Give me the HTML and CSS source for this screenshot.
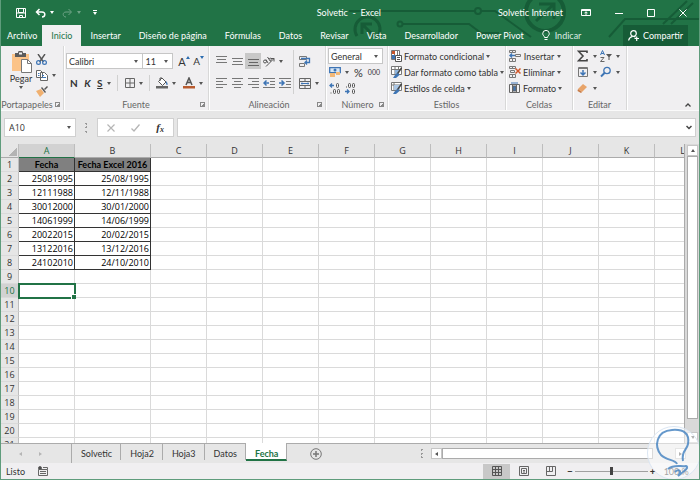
FILE: index.html
```
<!DOCTYPE html>
<html lang="es">
<head>
    <meta charset="UTF-8">
    <meta name="viewport" content="width=device-width, initial-scale=1.0">
    <title>Solvetic - Excel</title>
    <link rel="stylesheet" href="styles.css">
</head>
<body>
<div class="window">
    <header class="top">
        <svg class="circuit" width="350" height="46" viewBox="0 0 350 46" fill="none" stroke="#165c37" stroke-width="2">
            <path d="M0 11h126M132 11h14l36 26M54 24h66l12 9h18M260 37l16-18h74M314 24l24-23M322 24l22-21"/>
            <circle cx="129" cy="11" r="3"/>
            <circle cx="51" cy="24" r="2.5"/>
            <path d="M8 36A12.500 12.500 0 1 1 29 36M25 36L14 25M13 34V24h10" stroke-width="3"/>
            <circle cx="196" cy="12" r="19" stroke-width="4"/>
            <path d="M187 21l17-16M190 4h15v15" stroke-width="3"/>
        </svg>
        <div class="titlebar">
            <div class="quick">
                <button title="Guardar"><svg width="12" height="12" viewBox="0 0 12 12" fill="none" stroke="#fff"><path d="M1.500 1.500h9v9h-9zM2 6h8M3.500 1.500v4h5v-4M4.500 10.500v-2h3v2"/></svg></button>
                <button title="Deshacer"><svg width="11" height="10" viewBox="0 0 11 10" fill="none" stroke="#fff" stroke-width="1.500"><path d="M4.500 1L1.500 4l3 3M2 4h5c4 0 3.500 5 0 5"/></svg><i class="caret"></i></button>
                <button title="Rehacer" class="dim"><svg width="11" height="10" viewBox="0 0 11 10" fill="none" stroke="#fff"><path d="M6.500 1l3 3-3 3M9 4H4C0 4 .5 9 4 9"/></svg><i class="caret"></i></button>
                <button title="Personalizar" class="more"><i class="caret"></i></button>
            </div>
            <div class="doc-title">Solvetic &nbsp;-&nbsp; Excel</div>
            <div class="account">Solvetic Internet</div>
            <div class="win-buttons">
                <button title="Opciones de cinta"><svg width="10" height="9" viewBox="0 0 10 9" fill="none" stroke="#fff"><path d="M.5 1.500h9v6h-9zM.5 2.500h9M5 7V4M3.500 5L5 3.800 6.500 5"/></svg></button>
                <button title="Minimizar"><svg width="8" height="8" viewBox="0 0 8 8" stroke="#fff"><path d="M0 4.500h8"/></svg></button>
                <button title="Maximizar"><svg width="8" height="8" viewBox="0 0 8 8" fill="none" stroke="#fff"><path d="M.5.5h7v7h-7z"/></svg></button>
                <button title="Cerrar"><svg width="8" height="8" viewBox="0 0 8 8" stroke="#fff"><path d="M.5.5l7 7M7.500.5l-7 7"/></svg></button>
            </div>
        </div>
        <nav class="tabs">
            <a href="#">Archivo</a>
            <a href="#" class="active">Inicio</a>
            <a href="#">Insertar</a>
            <a href="#">Diseño de página</a>
            <a href="#">Fórmulas</a>
            <a href="#">Datos</a>
            <a href="#">Revisar</a>
            <a href="#">Vista</a>
            <a href="#">Desarrollador</a>
            <a href="#">Power Pivot</a>
            <a href="#" class="tell"><svg width="8" height="11" viewBox="0 0 8 11" fill="none" stroke="#fff"><path d="M2.500 7.500C2.500 6 .7 5.500.7 3.700a3.300 3.300 0 0 1 6.600 0C7.300 5.500 5.500 6 5.500 7.500zM2.500 9.500h3"/></svg>Indicar</a>
            <button class="share"><svg width="11" height="11" viewBox="0 0 11 11" fill="none" stroke="#fff" stroke-width="1.200"><circle cx="5.500" cy="3.500" r="2.800"/><path d="M.6 10.500C1 8 2.500 6.800 4.500 6.300M6 6.300l1.500 1M6.500 8.500h4.500M8.700 6.500V11"/></svg>Compartir</button>
        </nav>
    </header>

    <section class="ribbon">
        <div class="group clipboard">
            <div class="body">
                <button class="paste">
                    <svg width="21" height="22" viewBox="0 0 21 22"><path d="M1 3h17v17H1z" fill="#fbc388"/><path d="M4 2h3a2.500 2.500 0 0 1 5 0h3v4H4z" fill="#5b5b5b"/><path d="M8 1.500h3v2H8z" fill="#f0eff1"/><path d="M10.500 8.500h6l4 4v9h-10z" fill="#fff" stroke="#777"/><path d="M16.500 8.500v4h4" fill="none" stroke="#777"/></svg>
                    Pegar
                    <i class="caret"></i>
                </button>
                <div class="stack">
                    <button title="Cortar"><svg width="11" height="11" viewBox="0 0 11 11" fill="none"><path d="M2 0l5.500 8M9 0L3.500 8" stroke="#555" stroke-width="1.400"/><circle cx="2.500" cy="8.500" r="1.900" stroke="#3e75b5" stroke-width="1.200"/><circle cx="8.500" cy="8.500" r="1.900" stroke="#3e75b5" stroke-width="1.200"/></svg></button>
                    <button title="Copiar"><svg width="12" height="11" viewBox="0 0 12 11" fill="#fff" stroke="#666"><path d="M.5.5h4l2 2v5h-6zM4.500 2.500h4l3 3v5h-7z"/><path d="M2 3.500h1.500M2 5.500h1.500M6 5.500h2M6 7.500h4" stroke="#3e75b5"/></svg><i class="caret"></i></button>
                    <button title="Copiar formato"><svg width="12" height="11" viewBox="0 0 12 11"><path d="M0 5l5-2 3 4-4 4z" fill="#f0b070"/><path d="M5 2l4 5 1-1-4-5z" fill="#555"/><path d="M8 3l3-3 1 1-3 3z" fill="#555"/></svg></button>
                </div>
            </div>
            <div class="label">Portapapeles<i class="launcher"></i></div>
        </div>

        <div class="group font">
            <div class="body two">
                <div class="line">
                    <label class="combo name"><select aria-label="Fuente"><option>Calibri</option></select><i class="caret"></i></label>
                    <label class="combo size"><select aria-label="Tamaño"><option>11</option></select><i class="caret"></i></label>
                    <button class="grow" title="Aumentar">A<svg width="4" height="3" viewBox="0 0 4 3"><path d="M0 3l2-3 2 3z" fill="#2b6cb0"/></svg></button>
                    <button class="grow small" title="Disminuir">A<svg width="4" height="3" viewBox="0 0 4 3"><path d="M0 0l2 3 2-3z" fill="#2b6cb0"/></svg></button>
                </div>
                <div class="line format">
                    <button><b>N</b></button>
                    <button><b><em>K</em></b></button>
                    <button><b><u>S</u></b><i class="caret"></i></button>
                    <span class="sep"></span>
                    <button title="Bordes"><svg width="10" height="10" viewBox="0 0 10 10" fill="none" stroke="#666"><path d="M.5.5h9v9h-9zM5 0v10M0 5h10"/></svg><i class="caret"></i></button>
                    <span class="sep"></span>
                    <button title="Relleno"><svg width="12" height="12" viewBox="0 0 12 12"><path d="M2.500 4.500L6 1l4 4-3.500 3.500z" fill="#fff" stroke="#555"/><path d="M4 4V1h2" fill="none" stroke="#555"/><path d="M10 4c2 2 2 4 1 4s-1-2-1-4z" fill="#3e75b5"/><path d="M0 9h12v2.500H0z" fill="#666"/></svg><i class="caret"></i></button>
                    <button title="Color de fuente"><svg width="12" height="12" viewBox="0 0 12 12"><path d="M3 8l3-7 3 7M4 5.500h4" fill="none" stroke="#555" stroke-width="1.500"/><path d="M0 9h12v2.500H0z" fill="#b85b2e"/></svg><i class="caret"></i></button>
                </div>
            </div>
            <div class="label">Fuente<i class="launcher"></i></div>
        </div>

        <div class="group align">
            <div class="body two">
                <div class="line">
                    <button title="Superior"><svg width="11" height="10" viewBox="0 0 11 10" stroke="#777"><path d="M0 .5h11M1 3.500h9M0 6.500h11"/></svg></button>
                    <button title="Medio"><svg width="11" height="10" viewBox="0 0 11 10" stroke="#777"><path d="M0 2.500h11M1 5.500h9M0 8.500h11"/></svg></button>
                    <button title="Inferior" class="on"><svg width="11" height="10" viewBox="0 0 11 10" stroke="#666"><path d="M0 3.500h11M1 6.500h9M0 9.500h11"/></svg></button>
                    <button title="Orientación"><svg width="12" height="11" viewBox="0 0 12 11" fill="none" stroke="#555"><path d="M3 10.500L11 2.500M8 2.500h3v3"/><circle cx="2" cy="5.500" r="1.500"/><path d="M3 3.500l2 3.500M4.500 1l3 4.500M6 3c2-2 3 0 1.500 2"/></svg><i class="caret"></i></button>
                    <span class="sep"></span>
                    <button title="Ajustar texto"><svg width="12" height="12" viewBox="0 0 12 12" fill="none"><path d="M.5 1.500h7v3h-7zM.5 8.500h5v3h-5z" stroke="#777"/><path d="M2 3.500h8.500v4H6M8 5.500l-2 2 2 2" stroke="#3e75b5" stroke-width="1.300"/></svg></button>
                </div>
                <div class="line">
                    <button title="Izquierda"><svg width="11" height="10" viewBox="0 0 11 10" stroke="#777"><path d="M0 .5h11M0 3.500h7M0 6.500h11M0 9.500h7"/></svg></button>
                    <button title="Centro"><svg width="11" height="10" viewBox="0 0 11 10" stroke="#777"><path d="M0 .5h11M2 3.500h7M0 6.500h11M2 9.500h7"/></svg></button>
                    <button title="Derecha"><svg width="11" height="10" viewBox="0 0 11 10" stroke="#777"><path d="M0 .5h11M4 3.500h7M0 6.500h11M4 9.500h7"/></svg></button>
                    <button title="Menos sangría"><svg width="12" height="10" viewBox="0 0 12 10" stroke="#777"><path d="M0 .5h12M7 3.500h5M7 6.500h5M0 9.500h12"/><path d="M6 5H1M3.500 2.500L1 5l2.500 2.500" fill="none" stroke="#3e75b5" stroke-width="1.500"/></svg></button>
                    <button title="Más sangría"><svg width="12" height="10" viewBox="0 0 12 10" stroke="#777"><path d="M0 .5h12M7 3.500h5M7 6.500h5M0 9.500h12"/><path d="M0 5h5M2.500 2.500L5 5 2.500 7.500" fill="none" stroke="#3e75b5" stroke-width="1.500"/></svg></button>
                    <span class="sep"></span>
                    <button title="Combinar"><svg width="12" height="11" viewBox="0 0 12 11" fill="none"><path d="M.5.5h11v10H.5zM0 3.500h12M0 7.500h12M6 0v3M6 8v3" stroke="#666"/><path d="M2 5.500h8M3 4.500v2M9 4.500v2" stroke="#3e75b5"/></svg><i class="caret"></i></button>
                </div>
            </div>
            <div class="label">Alineación<i class="launcher"></i></div>
        </div>

        <div class="group number">
            <div class="body three">
                <label class="combo"><select aria-label="Formato de número"><option>General</option></select><i class="caret"></i></label>
                <div class="line">
                    <button title="Moneda"><svg width="12" height="12" viewBox="0 0 12 12"><path d="M.7 1.700h10.600v5H.7z" fill="#d9e6f4" stroke="#3e75b5" stroke-width="1.300"/><circle cx="6" cy="4" r="1.500" fill="#3e75b5"/><path d="M1 7h5v4H1zM7 6h4v3H7z" fill="#f3b878"/></svg><i class="caret"></i></button>
                    <button class="percent">%</button>
                    <button class="thousand">000</button>
                </div>
                <div class="line">
                    <button title="Aumentar decimales"><svg width="11" height="11" viewBox="0 0 11 11" fill="none" stroke="#555"><path d="M5 2.500H1M3 .5l-2 2 2 2" stroke="#3e75b5" stroke-width="1.300"/><rect x="7.500" y=".5" width="2" height="4" rx="1"/><rect x="4.500" y="6.500" width="2" height="4" rx="1"/><rect x="8.500" y="6.500" width="2" height="4" rx="1"/><path d="M1.500 10h1"/></svg></button>
                    <button title="Disminuir decimales"><svg width="11" height="11" viewBox="0 0 11 11" fill="none" stroke="#555"><path d="M0 8.500h4M2 6.500l2 2-2 2" stroke="#3e75b5" stroke-width="1.300"/><rect x="3.500" y=".5" width="2" height="4" rx="1"/><rect x="7.500" y=".5" width="2" height="4" rx="1"/><rect x="7.500" y="6.500" width="2" height="4" rx="1"/><path d="M1 4h1"/></svg></button>
                </div>
            </div>
            <div class="label">Número<i class="launcher"></i></div>
        </div>

        <div class="group styles">
            <div class="body three">
                <button><svg width="11" height="12" viewBox="0 0 11 12"><path d="M.5.5h8v9h-8zM3.500 0v9M6.500 0v9" fill="#fff" stroke="#777"/><path d="M1 1h3v3H1z" fill="#c8552b"/><path d="M1 5h3v4H1z" fill="#3e75b5"/><path d="M4.500 5.500h6v6h-6zM6 7.500h3M6 9.500h3" fill="#fff" stroke="#555"/></svg>Formato condicional<i class="caret"></i></button>
                <button><svg width="11" height="12" viewBox="0 0 11 12"><path d="M.5.500h10v8H.5z" fill="#fff" stroke="#777"/><path d="M0 3.500h11M4 0v9M7.500 0v5" stroke="#777"/><path d="M4 4h4v4H4z" fill="#8fb4dc"/><path d="M10.500 2L6 8.500" stroke="#444" stroke-width="1.500"/><path d="M7 7l1.500 2L5 12H2l2-3z" fill="#3e75b5"/></svg>Dar formato como tabla<i class="caret"></i></button>
                <button><svg width="11" height="12" viewBox="0 0 11 12"><path d="M.5.500h10v8H.5z" fill="#fff" stroke="#777"/><path d="M0 3h11M3 0v9" stroke="#777"/><path d="M3 3h6v5H3z" fill="#a9c5e4"/><path d="M10.500 2L6 8.500" stroke="#444" stroke-width="1.500"/><path d="M7 7l1.500 2L5 12H2l2-3z" fill="#3e75b5"/></svg>Estilos de celda<i class="caret"></i></button>
            </div>
            <div class="label">Estilos</div>
        </div>

        <div class="group cells">
            <div class="body three">
                <button><svg width="12" height="12" viewBox="0 0 12 12" fill="none" stroke="#777"><path d="M.5.5h3v2h-3zM3.500.5h3v2h-3zM.5 8.500h3v3h-3zM3.500 8.500h3v3h-3zM6.500 4.500h5v2h-5z"/><path d="M6 5.500H1M3 3.500l-2 2 2 2" stroke="#3e75b5" stroke-width="1.400"/></svg><span>Insertar</span><i class="caret"></i></button>
                <button><svg width="12" height="12" viewBox="0 0 12 12" fill="none" stroke="#777"><path d="M.5.5h3v2h-3zM3.500.5h3v2h-3zM.5 8.500h3v3h-3zM3.500 8.500h3v3h-3zM1.500 4.500h4v2h-4z"/><path d="M6.500 2.500l5 5M11.500 2.500l-5 5" stroke="#d0562a" stroke-width="1.500"/></svg><span>Eliminar</span><i class="caret"></i></button>
                <button><svg width="12" height="12" viewBox="0 0 12 12" fill="none" stroke="#666"><path d="M.5 2.500h10v8H.5zM3.500 2v9M7.500 2v9"/><path d="M4 4h3v5H4z" fill="#3e75b5"/><path d="M2 1h7" stroke="#3e75b5"/></svg><span>Formato</span><i class="caret"></i></button>
            </div>
            <div class="label">Celdas</div>
        </div>

        <div class="group edit">
            <div class="body three">
                <div class="line">
                    <button title="Autosuma"><svg width="12" height="12" viewBox="0 0 12 12" fill="none" stroke="#444" stroke-width="1.600"><path d="M10 3V1.200H1.500L6 6l-4.500 4.800H10V9"/></svg><i class="caret"></i></button>
                    <button title="Ordenar y filtrar"><svg width="12" height="12" viewBox="0 0 12 12" fill="none"><path d="M.5 5L2.500.5 4.500 5M1 3.500h3" stroke="#3e75b5"/><path d="M.5 7.500h3.500l-3.500 4H4.500" stroke="#666"/><path d="M6 4h6L9.500 7v3h-1V7z" fill="#555"/></svg><i class="caret"></i></button>
                </div>
                <div class="line">
                    <button title="Rellenar"><svg width="12" height="12" viewBox="0 0 12 12" fill="none"><path d="M1.500 1.500h9v9h-9zM1 2.500h10" stroke="#777"/><path d="M6 4v5M3.500 6.500L6 9l2.500-2.500" stroke="#3e75b5" stroke-width="1.500"/></svg><i class="caret"></i></button>
                    <button title="Buscar"><svg width="12" height="12" viewBox="0 0 12 12" fill="none" stroke="#3e75b5"><circle cx="7" cy="4.500" r="3.200" stroke-width="1.300"/><path d="M4.500 7L1 10.500" stroke-width="2"/></svg><i class="caret"></i></button>
                </div>
                <div class="line">
                    <button title="Borrar"><svg width="12" height="12" viewBox="0 0 12 12"><path d="M1 7l5-5 4 3-5 5z" fill="#e8a46a"/><path d="M1 7l4 3-1 1-3.500-2z" fill="#c77a45"/></svg><i class="caret"></i></button>
                </div>
            </div>
            <div class="label">Editar</div>
        </div>
        <div class="rest"><button title="Contraer"><svg width="6" height="4" viewBox="0 0 6 4" fill="none" stroke="#444" stroke-width="1.300"><path d="M.5 3.500L3 1l2.500 2.500"/></svg></button></div>
    </section>

    <section class="formula-bar">
        <label class="name-box"><input type="text" value="A10" aria-label="Cuadro de nombres"><i class="caret"></i></label>
        <span class="dots"></span>
        <div class="fx-buttons">
            <button title="Cancelar"><svg width="8" height="8" viewBox="0 0 8 8" stroke="#b5b5b5" stroke-width="1.200"><path d="M.5.5l7 7M7.500.5l-7 7"/></svg></button>
            <button title="Introducir"><svg width="9" height="8" viewBox="0 0 9 8" fill="none" stroke="#b5b5b5" stroke-width="1.300"><path d="M.5 4.500L3 7l5.500-6.500"/></svg></button>
            <button title="Insertar función" class="fx">f<small>x</small></button>
        </div>
        <label class="formula"><input type="text" aria-label="Barra de fórmulas"><svg width="6" height="5" viewBox="0 0 6 5" fill="none" stroke="#444" stroke-width="1.500"><path d="M.5 1L3 3.500 5.500 1"/></svg></label>
    </section>

    <main class="sheet">
        <div class="grid">
            <table>
                <thead><tr id="columns"></tr></thead>
                <tbody id="rows"></tbody>
            </table>
        </div>
        <div class="vscroll">
            <button title="Arriba"><i class="caret up"></i></button>
            <span class="thumb"></span>
            <button title="Abajo"><i class="caret"></i></button>
        </div>
    </main>

    <section class="sheet-bar">
        <div class="arrows"><i></i><i class="next"></i></div>
        <a href="#">Solvetic</a>
        <a href="#">Hoja2</a>
        <a href="#">Hoja3</a>
        <a href="#">Datos</a>
        <a href="#" class="active">Fecha</a>
        <button class="add" title="Hoja nueva"><svg width="12" height="12" viewBox="0 0 12 12" fill="none" stroke="#777"><circle cx="6" cy="6" r="5.300"/><path d="M3 6h6M6 3v6" stroke-width="1.500"/></svg></button>
        <span class="dots"></span>
        <div class="hscroll">
            <button title="Izquierda"><i class="caret left"></i></button>
            <span class="thumb"></span>
            <button title="Derecha"><i class="caret right"></i></button>
        </div>
    </section>

    <footer class="status">
        <span>Listo</span>
        <svg class="macro" width="10" height="10" viewBox="0 0 10 10" fill="none" stroke="#666"><path d="M.5 3.500h9v6h-9zM2 5.500h6M2 7.500h6M5 1.500h4.500v2"/><circle cx="2" cy="2" r="1.500" fill="#444"/></svg>
        <div class="views">
            <button class="on" title="Normal"><svg width="10" height="10" viewBox="0 0 10 10" fill="none" stroke="#555"><path d="M.5.5h9v9h-9zM.5 3.500h9M.5 6.500h9M3.500.5v9M6.500.5v9"/></svg></button>
            <button title="Diseño de página"><svg width="10" height="10" viewBox="0 0 10 10" fill="none" stroke="#666"><path d="M.5.5h9v9h-9zM2.500 2.500h5v5h-5zM4 4.500h2M4 6h2"/></svg></button>
            <button title="Salto de página"><svg width="10" height="10" viewBox="0 0 10 10" fill="none" stroke="#666"><path d="M.5.5h9v9h-9zM3.500.5v5M6.500.5v5M.5 5.500h6"/></svg></button>
        </div>
        <div class="zoom">
            <button title="Alejar">−</button>
            <input type="range" min="0" max="200" value="100" aria-label="Zoom">
            <button title="Acercar">+</button>
            <span>100 %</span>
        </div>
    </footer>

    <svg class="watermark" width="54" height="54" viewBox="0 0 54 54" fill="none">
        <circle cx="27" cy="27" r="26.500" fill="#fff" fill-opacity=".55" stroke="#dbe6f3"/>
        <g stroke="#4a86c2" stroke-opacity=".85" stroke-width="2">
            <path d="M30 38C28 33 20 35 14 29C7 20 9 5 25 4C37 3 43 8 41 18C40 24 34 25 36 35"/>
            <path d="M21 43C27 38 34 41 39 40C42 41 39 44 31 50C36 44 31 43 28 46"/>
        </g>
    </svg>
</div>
<script src="script.js"></script>
</body>
</html>
```
FILE: styles.css
```
:root {
    --green: #217346;
    --dark-green: #165c37;
    --ribbon: #f0eff1;
    --panel: #e6e6e6;
    --line: #c6c6c6;
    --text: #333;
}
* {
    box-sizing: border-box;
}
body {
    margin: 0;
    font-family: Lato, "Open Sans", sans-serif;
    font-size: 9px;
    line-height: 11px;
    color: var(--text);
}
button, input, select {
    font: inherit;
    color: inherit;
    margin: 0;
    padding: 0;
    border: 0;
    background: none;
}
button {
    display: flex;
    align-items: center;
    white-space: nowrap;
}
a {
    color: inherit;
    text-decoration: none;
}
svg {
    display: block;
    flex: none;
}
.window {
    position: relative;
    display: flex;
    flex-direction: column;
    height: 100vh;
    overflow: hidden;
    background: var(--panel);
    border: 1px solid #5f9c7c;
    border-top: 0;
}
.caret {
    flex: none;
    border: 2px solid transparent;
    border-top: 3px solid #555;
    border-bottom: 0;
}
.caret.up {
    border-top: 0;
    border-bottom: 3px solid #555;
}
.caret.left {
    border: 2px solid transparent;
    border-right: 3px solid #555;
    border-left: 0;
}
.caret.right {
    border: 2px solid transparent;
    border-left: 3px solid #555;
    border-right: 0;
}

/* title and tabs */
.top {
    position: relative;
    background: var(--green);
    color: #fff;
}
.circuit {
    position: absolute;
    top: 0;
    right: 0;
}
.titlebar {
    position: relative;
    display: flex;
    align-items: center;
    height: 25px;
}
.titlebar .caret {
    border-top-color: #fff;
}
.quick {
    display: flex;
    flex: 1;
    align-items: center;
    gap: 8px;
    padding-left: 14px;
}
.quick button {
    gap: 4px;
}
.quick .dim {
    opacity: 0.35;
}
.quick .more {
    border-top: 1px solid #fff;
    padding-top: 1px;
    margin-left: 4px;
}
.doc-title {
    flex: none;
}
.account {
    display: flex;
    flex: 0 0 182px;
    justify-content: flex-end;
}
.win-buttons {
    display: flex;
    justify-content: space-between;
    padding: 0 12px 0 18px;
    width: 136px;
}
.tabs {
    position: relative;
    display: flex;
    height: 21px;
}
.tabs a {
    padding: 5px 9px 0;
    height: 21px;
    white-space: nowrap;
}
.tabs a:first-child {
    padding-left: 6px;
    padding-right: 5px;
}
.tabs .active {
    background: var(--ribbon);
    color: var(--green);
}
.tabs .tell {
    display: flex;
    gap: 5px;
    color: #dcebe2;
}
.share {
    margin-left: auto;
    margin-right: 11px;
    padding: 0 5px;
    gap: 4px;
    background: var(--dark-green);
}

/* ribbon */
.ribbon {
    display: flex;
    height: 65px;
    background: var(--ribbon);
    border-bottom: 1px solid #fafafa;
}
.group {
    display: flex;
    flex: none;
    flex-direction: column;
    padding-top: 2px;
    border-right: 1px solid #d8d8d8;
    box-shadow: 1px 0 #fff;
}
.group .body {
    flex: 1;
}
.group .label {
    position: relative;
    height: 11px;
    text-align: center;
    color: #666;
}
.launcher {
    position: absolute;
    right: 3px;
    bottom: 3px;
    width: 5px;
    height: 5px;
    border-left: 1px solid #888;
    border-top: 1px solid #888;
    background: linear-gradient(135deg, transparent 50%, #888 50%);
}
.line {
    display: flex;
    align-items: center;
}
.line button {
    gap: 4px;
}
.two .line {
    height: 22px;
}
.two {
    padding-top: 2px;
}
.three > * {
    height: 16px;
}
.sep {
    width: 1px;
    height: 16px;
    background: #d0d0d0;
}
.combo {
    display: flex;
    align-items: center;
    height: 16px;
    padding: 0 4px 0 2px;
    background: #fff;
    border: 1px solid var(--line);
}
.combo select {
    flex: 1;
    width: 0;
    appearance: none;
    outline: 0;
}
.clipboard {
    width: 63px;
}
.clipboard .body {
    display: flex;
    gap: 3px;
    padding: 3px 0 0 8px;
}
.clipboard .label {
    padding-right: 10px;
}
.paste {
    flex-direction: column;
    justify-content: flex-start;
    width: 24px;
}
.paste .caret {
    margin-top: 2px;
}
.stack button {
    height: 16px;
    gap: 4px;
}
.font {
    width: 145px;
}
.font .line:first-child {
    padding-left: 2px;
}
.name {
    width: 78px;
}
.size {
    width: 31px;
    margin-left: -1px;
    margin-right: 5px;
}
.font .grow {
    align-items: flex-start;
    gap: 0;
    width: 15px;
    font-size: 11px;
}
.font .small {
    font-size: 10px;
}
.format {
    justify-content: space-between;
    padding: 0 5px 0 6px;
    font-size: 10px;
}
.align {
    width: 117px;
    padding-left: 4px;
}
.align .line button {
    width: 16px;
    height: 16px;
    justify-content: center;
    flex: none;
}
.align .on {
    background: #c8c8c8;
}
.align .caret {
    margin-right: -8px;
}
.align .line .sep {
    margin-left: auto;
    height: 22px;
}
.align .line button:last-child {
    margin: 0 12px 0 3px;
}
.number {
    width: 62px;
    padding-left: 2px;
}
.number .combo {
    margin-right: 4px;
}
.number .line {
    gap: 5px;
    padding-left: 1px;
}
.percent {
    font-size: 11px;
}
.thousand {
    font-size: 7px;
}
.styles {
    width: 118px;
}
.styles .body, .cells .body {
    padding-left: 3px;
}
.styles .body button, .cells .body button {
    gap: 2px;
}
.cells {
    width: 67px;
}
.cells span {
    min-width: 32px;
}
.edit {
    width: 54px;
}
.edit .line {
    gap: 3px;
    padding-left: 4px;
}
.rest {
    display: flex;
    flex: 1;
    align-items: flex-end;
    justify-content: flex-end;
    padding: 3px 8px;
}

/* formula bar */
.formula-bar {
    display: flex;
    gap: 3px;
    padding: 7px 3px;
    height: 33px;
}
.name-box, .fx-buttons, .formula {
    display: flex;
    align-items: center;
    background: #fff;
    border: 1px solid #d0d0d0;
}
.name-box {
    width: 72px;
    padding: 0 4px;
    font-family: "Open Sans", sans-serif;
}
.name-box input {
    flex: 1;
    width: 0;
}
.dots {
    width: 15px;
    background: radial-gradient(circle, #999 1px, transparent 1px) center / 3px 3px no-repeat, radial-gradient(circle, #999 1px, transparent 1px) center 4px / 3px 3px no-repeat, radial-gradient(circle, #999 1px, transparent 1px) center 12px / 3px 3px no-repeat;
}
.fx-buttons {
    width: 77px;
    justify-content: space-between;
    padding: 0 9px;
}
.fx {
    font-family: "Liberation Serif", serif;
    font-size: 11px;
    font-style: italic;
    font-weight: bold;
}
.fx small {
    padding-top: 3px;
    font-size: 8px;
}
.formula {
    flex: 1;
    padding: 0 3px;
}
.formula input {
    flex: 1;
    width: 0;
}

/* cells */
.sheet {
    display: flex;
    flex: 1;
    min-height: 0;
    border-bottom: 1px solid #ababab;
}
.grid {
    flex: 1;
    min-width: 0;
    overflow: hidden;
    background: #fff;
    border-right: 1px solid #ababab;
    font-family: "Open Sans", sans-serif;
}
.grid table {
    table-layout: fixed;
    width: 710px;
    border-spacing: 0;
}
.grid th, .grid td {
    height: 14px;
    padding: 0;
    line-height: 13px;
    border-right: 1px solid #dadada;
    border-bottom: 1px solid #dadada;
    white-space: nowrap;
}
.grid th {
    width: 56px;
    font-weight: normal;
    background: var(--panel);
    border-right-color: #bdbdbd;
}
.grid thead th {
    border-bottom-color: #ababab;
}
.grid .corner {
    width: 18px;
    background: linear-gradient(135deg, transparent 50%, #b4b4b4 50%) 7px 3px / 9px 9px no-repeat var(--panel);
}
.grid .wide {
    width: 76px;
}
.grid th.current {
    color: var(--green);
    background: #d2d2d2;
}
.grid thead th.current {
    border-bottom: 1px solid var(--green);
}
.grid td.data {
    padding-right: 1px;
    text-align: right;
    color: #000;
    border-color: #333;
}
.grid td.head {
    padding-right: 0;
    font-family: Lato, sans-serif;
    font-weight: bold;
    text-align: center;
    background: #808080;
}
.grid .selected {
    position: relative;
    outline: 2px solid var(--green);
    outline-offset: -1px;
}
.grid .selected::after {
    content: "";
    position: absolute;
    right: -2px;
    bottom: -2px;
    width: 4px;
    height: 4px;
    background: var(--green);
    border: solid #fff;
    border-width: 1px 0 0 1px;
}
.vscroll {
    display: flex;
    flex-direction: column;
    width: 14px;
    padding: 1px 1px 0 2px;
    background: #d9d9d9;
}
.vscroll button, .hscroll button {
    justify-content: center;
    width: 11px;
    height: 11px;
    background: #fff;
    border: 1px solid var(--line);
}
.vscroll .thumb {
    flex: 1;
    width: 11px;
    margin-bottom: 13px;
    background: #fff;
    border: 1px solid #ababab;
}

/* sheet tabs */
.sheet-bar {
    display: flex;
    height: 19px;
}
.arrows {
    display: flex;
    align-items: center;
    gap: 17px;
    width: 71px;
    padding-left: 18px;
    border-right: 1px solid #ababab;
}
.arrows i {
    border: 2px solid transparent;
    border-right: 3px solid #b5b5b5;
    border-left: 0;
}
.arrows .next {
    border: 2px solid transparent;
    border-left: 3px solid #b5b5b5;
    border-right: 0;
}
.sheet-bar a {
    height: 16px;
    padding: 4px 8px 0 9px;
    border-right: 1px solid #ababab;
}
.sheet-bar .active {
    margin-top: -1px;
    height: 18px;
    padding-top: 5px;
    font-weight: bold;
    color: var(--green);
    background: #fff;
    border-bottom: 2px solid var(--green);
}
.add {
    margin: 0 auto 0 23px;
}
.hscroll {
    display: flex;
    align-items: center;
    width: 255px;
    margin: 0 13px 0 2px;
}
.hscroll .thumb {
    flex: 1;
    height: 11px;
    margin-right: 22px;
    background: #fff;
    border: 1px solid #ababab;
}

/* status */
.status {
    display: flex;
    align-items: center;
    height: 16px;
    padding-left: 5px;
    background: var(--ribbon);
}
.macro {
    margin-left: 13px;
}
.views {
    display: flex;
    margin-left: auto;
}
.views button {
    justify-content: center;
    width: 27px;
    height: 15px;
}
.views .on {
    background: #c8c8c8;
}
.zoom {
    display: flex;
    align-items: center;
    width: 135px;
    padding-left: 3px;
}
.zoom button {
    font-size: 10px;
    font-weight: bold;
}
.zoom input {
    appearance: none;
    width: 73px;
    height: 1px;
    margin: 0 2px;
    background: #a0a0a0;
}
.zoom input::-webkit-slider-thumb {
    appearance: none;
    width: 3px;
    height: 8px;
    background: #444;
}
.zoom span {
    margin-left: 8px;
    white-space: nowrap;
}
.watermark {
    position: absolute;
    right: -2px;
    bottom: -1px;
}
```
FILE: script.js
```
const columns = 'ABCDEFGHIJKL'.split('');
const data = [
    ['Fecha', 'Fecha Excel 2016'],
    ['25081995', '25/08/1995'],
    ['12111988', '12/11/1988'],
    ['30012000', '30/01/2000'],
    ['14061999', '14/06/1999'],
    ['20022015', '20/02/2015'],
    ['13122016', '13/12/2016'],
    ['24102010', '24/10/2010']
];

const columnClass = (name) => {
    if (name === 'A') return 'current';
    return name === 'B' ? 'wide' : '';
};

const cellClass = (row, col) => {
    if (row === 10 && col === 0) return 'selected';
    if (row > data.length || col > 1) return '';
    return row === 1 ? 'data head' : 'data';
};

document.getElementById('columns').innerHTML = '<th class="corner"></th>' +
    columns.map(name => `<th class="${columnClass(name)}">${name}</th>`).join('');

let html = '';
for (let row = 1; row <= 21; row++) {
    const values = data[row - 1] || [];
    html += `<tr><th class="${row === 10 ? 'current' : ''}">${row}</th>` +
        columns.map((name, col) => `<td class="${cellClass(row, col)}">${values[col] || ''}</td>`).join('') +
        '</tr>';
}
document.getElementById('rows').innerHTML = html;
```
